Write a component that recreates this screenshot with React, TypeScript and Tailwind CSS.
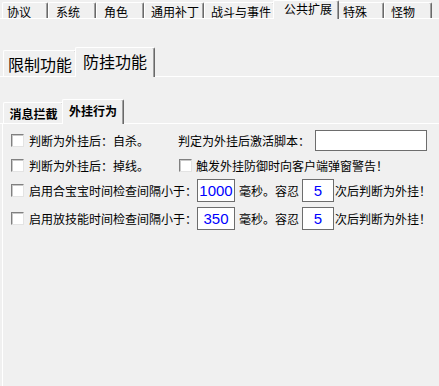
import React from "react";

const topTabs = [
  { label: "协议", w: "w-[46px]", pad: "pl-[4px]" },
  { label: "系统", w: "w-[48px]", pad: "pl-[7px]" },
  { label: "角色", w: "w-[48px]", pad: "pl-[7px]" },
  { label: "通用补丁", w: "w-[60px]", pad: "pl-[6px]" },
  { label: "战斗与事件", w: "w-[71px]", pad: "pl-[6px]" },
  { label: "公共扩展", w: "w-[66px]", pad: "pl-[10px]", active: true },
  { label: "特殊", w: "w-[47px]", pad: "pl-[5px]" },
  { label: "怪物", w: "w-[48px]", pad: "pl-[6px]" },
];

const tabEdge =
  "border-t border-l border-r border-t-white border-l-white border-r-[#696969] shadow-[inset_-1px_0_0_#a0a0a0] rounded-t-[2px] bg-[#f0f0f0]";

function Check() {
  return (
    <div className="w-[13px] h-[13px] shrink-0 bg-white border border-t-[#808080] border-l-[#808080] border-b-[#e3e3e3] border-r-[#e3e3e3] shadow-[inset_1px_1px_0_#c8c8c8]" />
  );
}

function NumBox({ value, w }: { value: string; w: string }) {
  return (
    <div
      className={`${w} h-[23px] shrink-0 bg-white border border-[#6d6d6d] flex items-center justify-center text-[15px] text-[#0000ff] font-['Liberation_Sans',Arial,sans-serif]`}
    >
      {value}
    </div>
  );
}

export default function App() {
  return (
    <div className="w-[439px] h-[386px] bg-[#f0f0f0] overflow-hidden flex flex-col text-black font-['Noto_Sans_CJK_SC','Noto_Sans',sans-serif]">
      {/* top tab strip */}
      <div className="h-[19px] shrink-0 flex items-end pl-[2px] border-b border-white">
        {topTabs.map((t) =>
          t.active ? (
            <div
              key={t.label}
              className={`${t.w} ${t.pad} ${tabEdge} relative z-10 -mx-[2px] -mb-px h-[19px] text-[12px] leading-[16px]`}
            >
              {t.label}
            </div>
          ) : (
            <div
              key={t.label}
              className={`${t.w} ${t.pad} ${tabEdge} h-[16px] text-[12px] leading-[17px]`}
            >
              {t.label}
            </div>
          )
        )}
      </div>

      {/* second level tabs */}
      <div className="mt-[28px] h-[30px] shrink-0 flex items-end pl-[3px] border-b border-white">
        <div className={`${tabEdge} w-[74px] h-[26px] text-[16px] leading-[26px] text-center`}>
          限制功能
        </div>
        <div
          className={`${tabEdge} relative z-10 -mx-[2px] -mb-px w-[80px] h-[30px] text-[16px] leading-[27px] text-center`}
        >
          防挂功能
        </div>
      </div>

      {/* third level tabs */}
      <div className="mt-[22px] h-[25px] shrink-0 flex items-end pl-[3px] border-b border-white">
        <div className={`${tabEdge} w-[61px] h-[21px] text-[12px] font-bold leading-[22px] text-center`}>
          消息拦截
        </div>
        <div
          className={`${tabEdge} relative z-10 -mx-[2px] -mb-px w-[62px] h-[25px] text-[12px] font-bold leading-[22px] text-center`}
        >
          外挂行为
        </div>
      </div>

      {/* pane */}
      <div className="flex-1 ml-[2px] border-l border-white pl-[8px] text-[12px] leading-[14px]">
        {/* row 1 */}
        <div className="mt-[6px] h-[21px] flex items-center">
          <div className="w-[167px] flex items-center gap-[5px]">
            <Check />
            <span>判断为外挂后：自杀。</span>
          </div>
          <span>判定为外挂后激活脚本：</span>
          <div className="ml-[5px] w-[112px] h-[21px] bg-white border border-[#6d6d6d]" />
        </div>

        {/* row 2 */}
        <div className="mt-[8px] h-[13px] flex items-center">
          <div className="w-[168px] flex items-center gap-[5px]">
            <Check />
            <span>判断为外挂后：掉线。</span>
          </div>
          <div className="flex items-center gap-[4px]">
            <Check />
            <span>触发外挂防御时向客户端弹窗警告！</span>
          </div>
        </div>

        {/* row 3 */}
        <div className="mt-[7px] h-[23px] flex items-center">
          <div className="flex items-center gap-[5px]">
            <Check />
            <span>启用合宝宝时间检查间隔小于：</span>
          </div>
          <NumBox value="1000" w="w-[38px]" />
          <span className="ml-[4px]">毫秒。容忍</span>
          <div className="ml-[3px]">
            <NumBox value="5" w="w-[32px]" />
          </div>
          <span className="ml-[1px]">次后判断为外挂！</span>
        </div>

        {/* row 4 */}
        <div className="mt-[5px] h-[23px] flex items-center">
          <div className="flex items-center gap-[5px]">
            <Check />
            <span>启用放技能时间检查间隔小于：</span>
          </div>
          <NumBox value="350" w="w-[38px]" />
          <span className="ml-[4px]">毫秒。容忍</span>
          <div className="ml-[3px]">
            <NumBox value="5" w="w-[32px]" />
          </div>
          <span className="ml-[1px]">次后判断为外挂！</span>
        </div>
      </div>
    </div>
  );
}
